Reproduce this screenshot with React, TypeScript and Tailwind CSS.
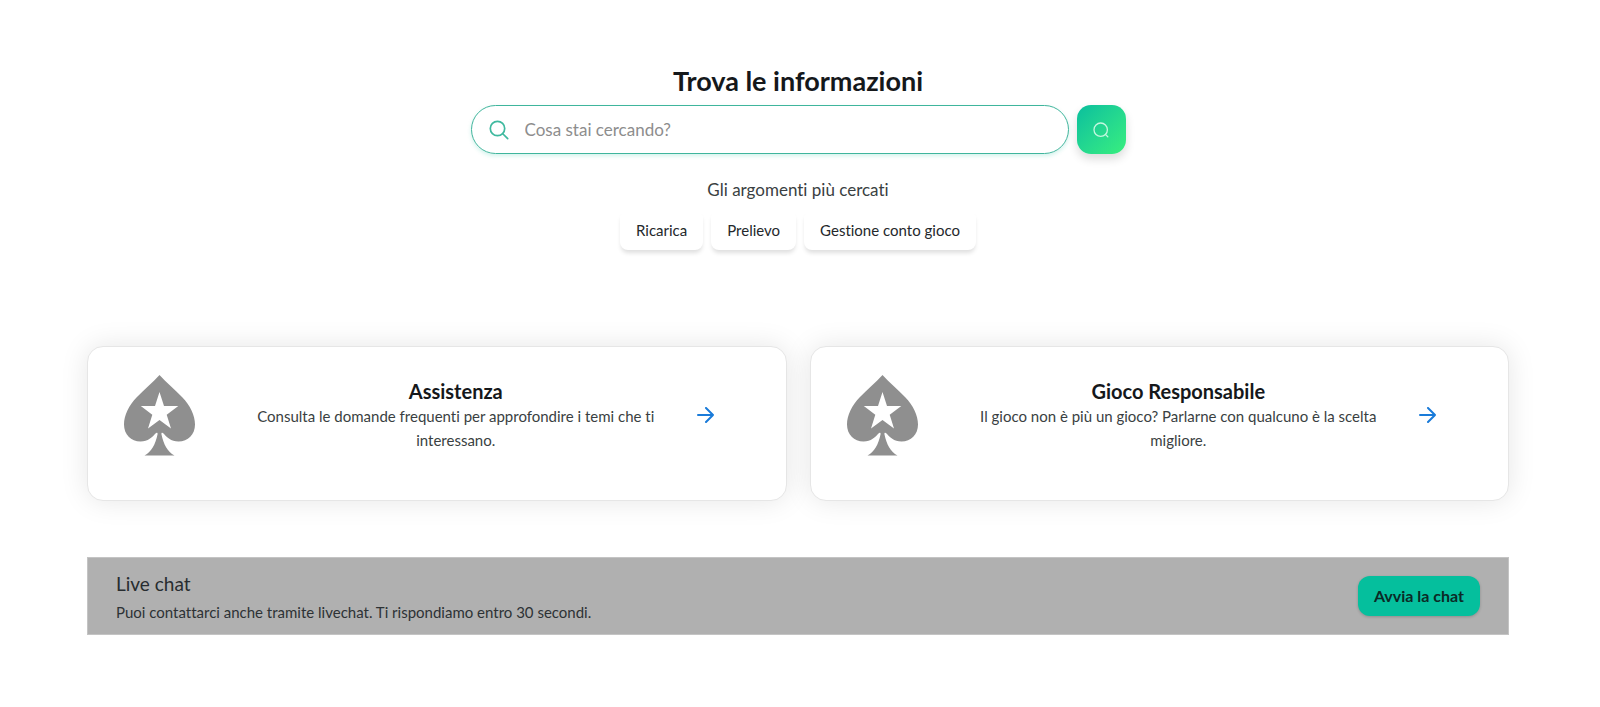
import React from "react";

const topics = ["Ricarica", "Prelievo", "Gestione conto gioco"];

const cards = [
  {
    title: "Assistenza",
    text: "Consulta le domande frequenti per approfondire i temi che ti interessano.",
  },
  {
    title: "Gioco Responsabile",
    text: "Il gioco non è più un gioco? Parlarne con qualcuno è la scelta migliore.",
  },
];

function SpadeIcon() {
  return (
    <svg viewBox="0 0 71 81" className="h-[81px] w-[71px] shrink-0" aria-hidden="true">
      <path
        fill="#8f8f8f"
        fillRule="evenodd"
        d="M35.5 0C42 7.500 51 14.500 58.500 22.500C66 30.500 71 40 71 49.500C71 59.500 64 66.500 54.500 66.500C47 66.500 42.500 62 39.500 58.500C38.500 57.300 37 57.500 37.500 59.500C39.500 69 43.500 77 50.500 80.500H20.500C27.500 77 31.500 69 33.500 59.500C34 57.500 32.500 57.300 31.500 58.500C28.500 62 24 66.500 16.500 66.500C7 66.500 0 59.500 0 49.500C0 40 5 30.500 12.500 22.500C20 14.500 29 7.500 35.500 0ZM35.500 17L31 31H16.800L28.300 39.700L24 53.500L35.500 45L47 53.500L42.700 39.700L54.300 31H40Z"
      />
    </svg>
  );
}

function SearchIcon({ className, strokeWidth }: { className: string; strokeWidth: number }) {
  return (
    <svg viewBox="0 0 20 20" className={className} fill="none" stroke="currentColor" strokeWidth={strokeWidth} strokeLinecap="round" aria-hidden="true">
      <circle cx="8.500" cy="8.500" r="7.200" />
      <path d="M14 14l4.700 4.700" />
    </svg>
  );
}

function ButtonSearchIcon() {
  return (
    <svg viewBox="0 0 16 16" className="size-4" fill="none" stroke="currentColor" strokeWidth="1.300" strokeLinecap="round" aria-hidden="true">
      <circle cx="7.700" cy="7.700" r="6.700" />
      <path d="M12.400 12.400l2.400 2.400" />
    </svg>
  );
}

function ArrowIcon() {
  return (
    <svg viewBox="0 0 17 16" className="h-4 w-[17px]" fill="none" stroke="currentColor" strokeWidth="2" strokeLinecap="round" strokeLinejoin="round" aria-hidden="true">
      <path d="M1 8h15M9 1l7 7-7 7" />
    </svg>
  );
}

export default function App() {
  return (
    <main className="bg-white pt-16 pr-[91px] pb-[72px] pl-[87px] font-['Lato','Liberation_Sans',sans-serif] text-[15px] text-[#3a3f42] [font-variant-ligatures:none]">
      <section className="flex flex-col items-center">
        <h1 className="text-[27px] leading-[34px] font-bold text-[#15181b]">Trova le informazioni</h1>
        <form className="mt-[7px] flex w-full max-w-[655px] gap-2" onSubmit={(e) => e.preventDefault()}>
          <label className="flex h-[49px] min-w-0 flex-1 items-center gap-4 rounded-full border border-[#3fb59c] px-[17px] shadow-[0_2px_4px_rgba(0,190,150,0.18)]">
            <SearchIcon className="size-5 shrink-0 text-[#3fb99f]" strokeWidth={1.7} />
            <input
              type="text"
              aria-label="Cosa stai cercando?"
              placeholder="Cosa stai cercando?"
              className="min-w-0 flex-1 bg-transparent text-[17px] outline-none placeholder:text-[#8d8d8d]"
            />
          </label>
          <button
            type="submit"
            aria-label="Cerca"
            className="flex size-[49px] shrink-0 items-center justify-center rounded-[14px] bg-linear-to-br from-[#08bf9d] to-[#38ef7d] text-[#c4f7e0] shadow-[0_5px_10px_rgba(0,0,0,0.14)]"
          >
            <ButtonSearchIcon />
          </button>
        </form>
        <h2 className="mt-6 text-[17px] leading-6">Gli argomenti più cercati</h2>
        <div className="flex justify-center gap-2 overflow-hidden px-4 pt-2 pb-4">
          {topics.map((topic) => (
            <button
              key={topic}
              type="button"
              className="h-10 rounded-lg bg-white px-4 text-[15px] text-[#24282b] shadow-[0_4px_4px_-1px_rgba(0,0,0,0.13)]"
            >
              {topic}
            </button>
          ))}
        </div>
      </section>

      <section className="mt-20 grid grid-cols-2 gap-[23px]">
        {cards.map((card) => (
          <a
            key={card.title}
            href="#"
            className="flex h-[155px] items-start rounded-2xl border border-[#e6e6e6] bg-white pt-7 pr-[72px] pl-9 shadow-[0_0_28px_rgba(0,0,0,0.10)]"
          >
            <SpadeIcon />
            <span className="ml-[62px] flex min-w-0 flex-1 flex-col pt-1 text-center">
              <span className="text-[20px] leading-[25px] font-bold text-[#15181b]">{card.title}</span>
              <span className="mx-auto max-w-[400px] leading-6">{card.text}</span>
            </span>
            <span className="ml-[42px] pt-8 text-[#1a7bd9]">
              <ArrowIcon />
            </span>
          </a>
        ))}
      </section>

      <section className="mt-14 flex min-h-[78px] items-center justify-between border border-[#c4c4c4] bg-[#b0b0b0] px-7">
        <div className="pt-1">
          <h2 className="text-[19px] leading-7 text-[#272c2f]">Live chat</h2>
          <p className="leading-7 text-[#2d3235]">
            Puoi contattarci anche tramite livechat. Ti rispondiamo entro 30 secondi.
          </p>
        </div>
        <button
          type="button"
          className="h-10 rounded-xl bg-[#05bf9d] px-4 text-[16px] font-bold text-[#0b2a26] shadow-[0_1px_3px_rgba(0,0,0,0.2)]"
        >
          Avvia la chat
        </button>
      </section>
    </main>
  );
}
